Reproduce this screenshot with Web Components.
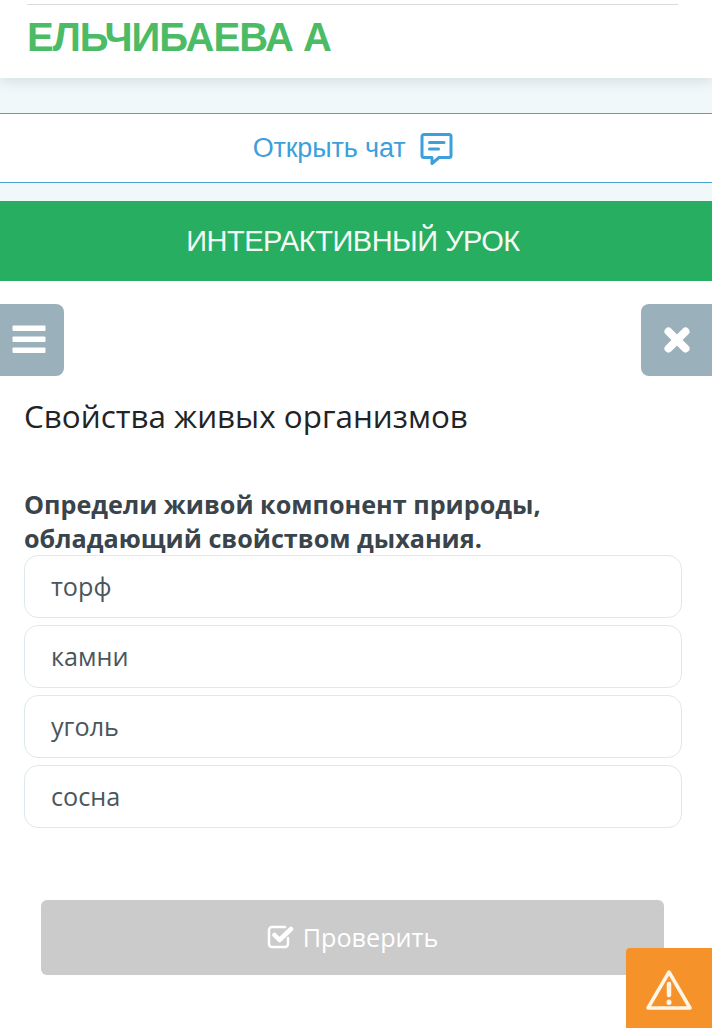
<!DOCTYPE html>
<html lang="ru">
<head>
<meta charset="utf-8">
<title>Интерактивный урок</title>
<style>
  html, body { margin: 0; padding: 0; background: #fff; }
  body { width: 712px; height: 1028px; overflow: hidden; position: relative; font-family: "Open Sans", sans-serif; }
</style>
</head>
<body>
<student-header>ЕЛЬЧИБАЕВА А</student-header>
<chat-bar>Открыть чат</chat-bar>
<lesson-banner>ИНТЕРАКТИВНЫЙ УРОК</lesson-banner>
<lesson-toolbar></lesson-toolbar>
<quiz-card heading="Свойства живых организмов">
  <span slot="question">Определи живой компонент природы, обладающий свойством дыхания.</span>
  <quiz-option>торф</quiz-option>
  <quiz-option>камни</quiz-option>
  <quiz-option>уголь</quiz-option>
  <quiz-option>сосна</quiz-option>
</quiz-card>
<check-button>Проверить</check-button>
<report-button></report-button>

<script>
  /**
   * Defines a custom element whose shadow root holds the given markup.
   *
   * @param {string} name - tag name of the element
   * @param {string} html - styles and markup of the shadow root
   */
  function defineElement (name, html) {
    const template = document.createElement('template')
    template.innerHTML = html

    customElements.define(name, class extends HTMLElement {
      constructor () {
        super()
        this.attachShadow({ mode: 'open' })
        this.shadowRoot.appendChild(template.content.cloneNode(true))
      }

      connectedCallback () {
        const heading = this.shadowRoot.querySelector('.heading')
        if (heading) {
          heading.textContent = this.getAttribute('heading')
        }
      }
    })
  }

  defineElement('student-header', `
    <style>
      :host {
        display: block;
        height: 78px;
        box-sizing: border-box;
        padding: 4px 34px 0 27px;
        background: #fff;
        position: relative;
        box-shadow: 0 2px 14px rgba(90, 110, 120, 0.22);
      }
      .rule { height: 1px; background: #d9dcdc; }
      .name {
        font: bold 40px/1 "Liberation Sans", Arial, sans-serif;
        letter-spacing: -1px;
        color: #4cbb66;
        padding-top: 12px;
      }
    </style>
    <div class="rule"></div>
    <div class="name"><slot></slot></div>
  `)

  defineElement('chat-bar', `
    <style>
      :host {
        display: block;
        padding: 35px 0 18px;
        background: #f1f8fa;
      }
      .bar {
        height: 68px;
        box-sizing: content-box;
        padding-right: 6px;
        display: flex;
        align-items: center;
        justify-content: center;
        gap: 15px;
        background: #fff;
        border-top: 1px solid #4da3d3;
        border-bottom: 1px solid #4da3d3;
        font: 27px/1 "Liberation Sans", Arial, sans-serif;
        letter-spacing: -0.15px;
        color: #3d9fdb;
      }
      svg { display: block; width: 33px; height: 34px; margin-top: 1px; }
    </style>
    <div class="bar">
      <span><slot></slot></span>
      <svg viewBox="0 0 33 34" fill="none" stroke="#3d9fdb" stroke-width="3" stroke-linejoin="round" stroke-linecap="round">
        <path d="M4 2.500h25a2 2 0 0 1 2 2v19a2 2 0 0 1-2 2H19l-7 6v-6H4a2 2 0 0 1-2-2v-19a2 2 0 0 1 2-2z"/>
        <path d="M9.500 10.500h14.500M9.500 17h9"/>
      </svg>
    </div>
  `)

  defineElement('lesson-banner', `
    <style>
      :host {
        display: flex;
        align-items: center;
        justify-content: center;
        height: 80px;
        box-sizing: border-box;
        padding: 1px 6px 0 0;
        background: #27ae60;
        color: #f4fbf6;
        font: 29px/1 "Liberation Sans", Arial, sans-serif;
        letter-spacing: -0.5px;
      }
    </style>
    <slot></slot>
  `)

  defineElement('lesson-toolbar', `
    <style>
      :host {
        display: flex;
        justify-content: space-between;
        padding-top: 23px;
      }
      .tool {
        height: 72px;
        background: #9ab1bc;
        display: flex;
        align-items: center;
        justify-content: center;
      }
      .menu { border-radius: 0 8px 8px 0; padding: 0 7px 3px 0; box-sizing: border-box; width: 64px; }
      .close { border-radius: 8px 0 0 8px; width: 71px; }
      svg { display: block; }
    </style>
    <div class="tool menu">
      <svg width="34" height="28" viewBox="0 0 34 28" fill="#fff">
        <rect x="0.500" y="0.500" width="33" height="5.500" rx="1"/>
        <rect x="0.500" y="11.500" width="33" height="5.500" rx="1"/>
        <rect x="0.500" y="22.500" width="33" height="5.500" rx="1"/>
      </svg>
    </div>
    <div class="tool close">
      <svg width="28" height="28" viewBox="0 0 28 28" fill="none" stroke="#fff" stroke-width="8" stroke-linecap="round">
        <path d="M5.500 5.500l17 17M22.500 5.500l-17 17"/>
      </svg>
    </div>
  `)

  defineElement('quiz-card', `
    <style>
      :host {
        display: block;
        padding: 0 30px 0 24px;
        color: #3a4248;
      }
      .heading {
        margin: 0;
        padding-top: 21px;
        font: 400 31.400px/38px "Open Sans", sans-serif;
        color: #1f2426;
      }
      .question {
        margin: 0;
        padding-top: 52px;
        width: 640px;
        font: 700 25.200px/34px "Open Sans", sans-serif;
        color: #3a444b;
      }
      .options {
        display: flex;
        flex-direction: column;
        gap: 7.500px;
      }
    </style>
    <h1 class="heading"></h1>
    <p class="question"><slot name="question"></slot></p>
    <div class="options"><slot></slot></div>
  `)

  defineElement('quiz-option', `
    <style>
      :host {
        display: flex;
        align-items: center;
        box-sizing: border-box;
        height: 62.500px;
        padding-left: 26px;
        background: #fff;
        border: 1px solid #dde9ec;
        border-radius: 14px;
        font: 400 25.200px/1 "Open Sans", sans-serif;
        color: #4a565c;
      }
    </style>
    <slot></slot>
  `)

  defineElement('check-button', `
    <style>
      :host {
        display: flex;
        align-items: center;
        justify-content: center;
        gap: 9px;
        box-sizing: border-box;
        width: 623px;
        height: 75px;
        margin: 72.500px 0 0 41px;
        background: #cbcbcb;
        border-radius: 6px;
        color: #fff;
        font: 400 25.200px/1 "Open Sans", sans-serif;
      }
      svg { display: block; width: 27px; height: 25px; margin-top: -3px; }
    </style>
    <svg viewBox="0 0 27 25" fill="none" stroke="#fff" stroke-linecap="round" stroke-linejoin="round">
      <path stroke-width="2.500" d="M21 14v6a3 3 0 0 1-3 3H5a3 3 0 0 1-3-3V6a3 3 0 0 1 3-3h13"/>
      <path stroke-width="4.500" d="M7.500 11l5 5L24 5"/>
    </svg>
    <slot></slot>
  `)

  defineElement('report-button', `
    <style>
      :host {
        position: absolute;
        right: 0;
        bottom: 0;
        width: 86px;
        height: 80px;
        background: #f6922a;
        border-radius: 4px 0 0 0;
        display: flex;
        justify-content: center;
        padding-top: 21px;
        box-sizing: border-box;
      }
      svg { display: block; width: 46px; height: 42px; }
    </style>
    <svg viewBox="0 0 46 42" fill="none" stroke="#fff6e8" stroke-linejoin="round" stroke-linecap="round">
      <path stroke-width="3.500" d="M23 3L44 39H2z"/>
      <path stroke-width="4.500" d="M23 15v11"/>
      <path stroke-width="5" d="M23 33v.5"/>
    </svg>
  `)
</script>
</body>
</html>
